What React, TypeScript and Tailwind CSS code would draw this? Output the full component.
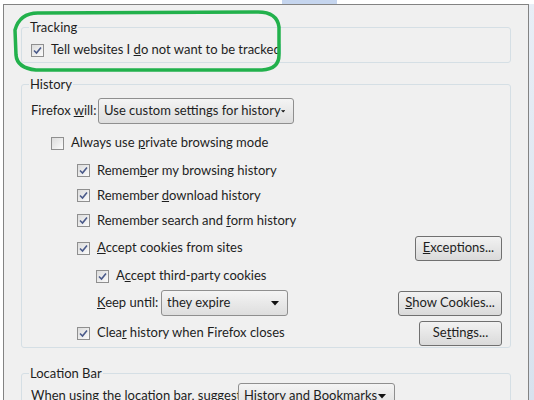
import React from "react";

const Check = () => (
  <span className="inline-flex w-[13px] h-[13px] border border-[#8f8f8f] bg-gradient-to-br from-[#dcdcdc] to-[#fbfbfb] items-center justify-center shrink-0">
    <svg width="9" height="9" viewBox="0 0 9 9"><path d="M1 4.5 L3.5 7 L8 1.5" stroke="#4a5a8a" strokeWidth="1.6" fill="none" /></svg>
  </span>
);
const Empty = () => <span className="inline-block w-[13px] h-[13px] border border-[#8f8f8f] bg-gradient-to-br from-[#dcdcdc] to-[#fbfbfb] shrink-0" />;

const Row = ({ left, checked = true, children, h = 25 }: any) => (
  <div className="flex items-center gap-[7px] whitespace-nowrap" style={{ paddingLeft: left, height: h }}>
    {checked ? <Check /> : <Empty />}
    <span>{children}</span>
  </div>
);

const Btn = ({ w, children }: any) => (
  <div className={`h-[25px] ${w} rounded-[3px] border border-[#707070] bg-gradient-to-b from-[#f2f2f2] to-[#dadada] flex items-center justify-center whitespace-nowrap`}>{children}</div>
);

const Select = ({ w, children }: any) => (
  <div className={`h-[26px] ${w} rounded-[3px] border border-[#8f8f8f] bg-gradient-to-b from-[#f4f4f4] to-[#dedede] flex items-center justify-between pl-[5px] pr-[8px] whitespace-nowrap`}>
    <span>{children}</span>
    <svg width="8" height="5" viewBox="0 0 8 5"><path d="M0 0H8L4 4.5Z" fill="#111" /></svg>
  </div>
);

export default function App() {
  return (
    <div className="relative w-[534px] h-[400px] overflow-hidden bg-white text-[13px] text-[#1e1e1e]" style={{ fontFamily: 'Lato, "Noto Sans", sans-serif' }}>
      <div className="h-[4px] flex"><div className="w-[282px]" /><div className="w-[55px] bg-[#c5d5ee]" /></div>
      <div className="absolute left-[3px] top-[4px] w-[526px] h-[396px] border-l border-t border-r border-[#838383] bg-[#f0f0f0] px-[17px] pt-[14px]">
        <fieldset className="border border-[#d5dfe5] rounded-[3px] h-[44px] px-[9px] mb-[13px]">
          <legend className="px-[1px] -ml-[2px] leading-[16px]">Tracking</legend>
          <Row left={0} h={30}>Tell websites I <u>d</u>o not want to be tracked</Row>
        </fieldset>
        <fieldset className="border border-[#d5dfe5] rounded-[3px] h-[272px] pl-[9px] pr-[8px] mb-[17px]">
          <legend className="px-[1px] -ml-[2px] leading-[16px]">History</legend>
          <div className="flex items-center h-[34px] mt-[2px] whitespace-nowrap">
            <span className="w-[67px]">Firefox <u>w</u>ill:</span>
            <Select w="w-[196px]">Use custom settings for history</Select>
          </div>
          <Row left={20} checked={false} h={30}>Always use <u>p</u>rivate browsing mode</Row>
          <Row left={46}>Remem<u>b</u>er my browsing history</Row>
          <Row left={46}>Remember <u>d</u>ownload history</Row>
          <Row left={46}>Remember search and <u>f</u>orm history</Row>
          <div className="flex items-center justify-between h-[30px]">
            <Row left={46} h={30}><u>A</u>ccept cookies from sites</Row>
            <Btn w="w-[87px]"><u>E</u>xceptions...</Btn>
          </div>
          <Row left={65} h={26}>A<u>c</u>cept third-party cookies</Row>
          <div className="flex items-center justify-between h-[28px]">
            <div className="flex items-center pl-[66px] whitespace-nowrap">
              <span className="w-[64px]"><u>K</u>eep until:</span>
              <Select w="w-[127px]">they expire</Select>
            </div>
            <Btn w="w-[104px]"><u>S</u>how Cookies...</Btn>
          </div>
          <div className="flex items-center justify-between h-[32px]">
            <Row left={46} h={32}>Clea<u>r</u> history when Firefox closes</Row>
            <Btn w="w-[83px]">Se<u>t</u>tings...</Btn>
          </div>
        </fieldset>
        <fieldset className="border border-[#d5dfe5] rounded-[3px] h-[60px] px-[9px]">
          <legend className="px-[1px] -ml-[2px] leading-[16px]">Location Bar</legend>
          <div className="flex items-center h-[26px] mt-[2px] whitespace-nowrap">
            <span className="w-[207px]">When using the location bar, suggest:</span>
            <Select w="w-[157px]">History and Bookmarks</Select>
          </div>
        </fieldset>
      </div>
      <div className="absolute left-[529px] top-[4px] w-[5px] h-[396px] bg-gradient-to-b from-[#e8eef6] to-[#d8e2ee]" />
      <svg className="absolute left-0 top-0" width="534" height="400">
        <path d="M40 13 Q20 12 15 30 L16 55 Q17 68 36 70 L262 70 Q279 69 279 55 L279 27 Q277 12 258 12 Z" fill="none" stroke="#22b14c" strokeWidth="3.5" />
      </svg>
    </div>
  );
}
